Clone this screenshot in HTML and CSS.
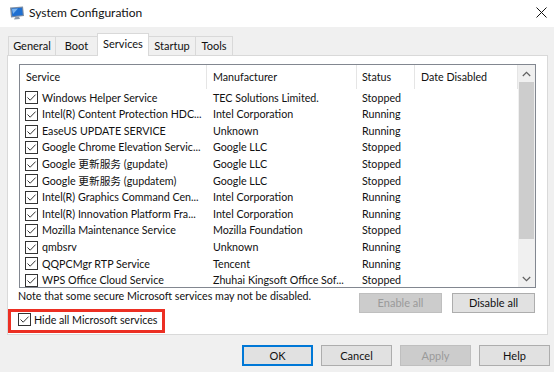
FILE: index.html
```html
<!DOCTYPE html>
<html>
<head>
<meta charset="utf-8">
<link rel="stylesheet" href="styles.css">
</head>
<body>
<div class="window">
  <div class="titlebar">
    <svg class="app-icon" width="16" height="14" viewBox="0 0 16 14">
      <path d="M1 1.5 L14 0.5 L15 10 L2 11.5 Z" fill="#7d8da3"/>
      <path d="M2.5 2.6 L13 1.8 L13.8 9 L3.3 10.2 Z" fill="#1f6fd1"/>
      <path d="M3 3 L9 2.5 L4 8 Z" fill="#8fc3f5" opacity="0.8"/>
      <path d="M6 11.2 L10 10.8 L11 13 L5 13.5 Z" fill="#8a96a6"/>
    </svg>
    <span class="title">System Configuration</span>
    <svg class="close" width="11" height="11" viewBox="0 0 11 11">
      <path d="M0.5 0.5 L10.5 10.5 M10.5 0.5 L0.5 10.5" stroke="#111" stroke-width="1"/>
    </svg>
  </div>
  <div class="main">
    <div class="tabs">
      <div class="tab w-general">General</div>
      <div class="tab w-boot">Boot</div>
      <div class="tab active w-services">Services</div>
      <div class="tab w-startup">Startup</div>
      <div class="tab w-tools">Tools</div>
    </div>
    <div class="panel">
      <div class="list">
        <div class="list-main">
          <div class="row head">
            <div class="th">Service</div>
            <div class="th">Manufacturer</div>
            <div class="th">Status</div>
            <div class="th">Date Disabled</div>
          </div>
          <div class="row"><div class="c1"><span class="cb"></span>Windows Helper Service</div><div class="c2">TEC Solutions Limited.</div><div class="c3">Stopped</div><div></div></div>
          <div class="row"><div class="c1"><span class="cb"></span>Intel(R) Content Protection HDC...</div><div class="c2">Intel Corporation</div><div class="c3">Running</div><div></div></div>
          <div class="row"><div class="c1"><span class="cb"></span>EaseUS UPDATE SERVICE</div><div class="c2">Unknown</div><div class="c3">Running</div><div></div></div>
          <div class="row"><div class="c1"><span class="cb"></span>Google Chrome Elevation Servic...</div><div class="c2">Google LLC</div><div class="c3">Stopped</div><div></div></div>
          <div class="row"><div class="c1"><span class="cb"></span>Google 更新服务 (gupdate)</div><div class="c2">Google LLC</div><div class="c3">Stopped</div><div></div></div>
          <div class="row"><div class="c1"><span class="cb"></span>Google 更新服务 (gupdatem)</div><div class="c2">Google LLC</div><div class="c3">Stopped</div><div></div></div>
          <div class="row"><div class="c1"><span class="cb"></span>Intel(R) Graphics Command Cen...</div><div class="c2">Intel Corporation</div><div class="c3">Running</div><div></div></div>
          <div class="row"><div class="c1"><span class="cb"></span>Intel(R) Innovation Platform Fra...</div><div class="c2">Intel Corporation</div><div class="c3">Running</div><div></div></div>
          <div class="row"><div class="c1"><span class="cb"></span>Mozilla Maintenance Service</div><div class="c2">Mozilla Foundation</div><div class="c3">Stopped</div><div></div></div>
          <div class="row"><div class="c1"><span class="cb"></span>qmbsrv</div><div class="c2">Unknown</div><div class="c3">Running</div><div></div></div>
          <div class="row"><div class="c1"><span class="cb"></span>QQPCMgr RTP Service</div><div class="c2">Tencent</div><div class="c3">Running</div><div></div></div>
          <div class="row"><div class="c1"><span class="cb"></span>WPS Office Cloud Service</div><div class="c2">Zhuhai Kingsoft Office Sof...</div><div class="c3">Stopped</div><div></div></div>
        </div>
        <div class="scrollbar">
          <div class="sb-arrow">
            <svg width="9" height="6" viewBox="0 0 9 6"><path d="M0.8 5 L4.5 1.3 L8.2 5" fill="none" stroke="#606060" stroke-width="1.2"/></svg>
          </div>
          <div class="sb-track"><div class="sb-thumb"></div></div>
          <div class="sb-arrow">
            <svg width="9" height="6" viewBox="0 0 9 6"><path d="M0.8 1 L4.5 4.7 L8.2 1" fill="none" stroke="#606060" stroke-width="1.2"/></svg>
          </div>
        </div>
      </div>
      <div class="under">
        <div class="under-left">
          <div class="note">Note that some secure Microsoft services may not be disabled.</div>
          <div class="hide-row"><span class="cb"></span>Hide all Microsoft services</div>
        </div>
        <div class="under-btns">
          <button class="btn wide disabled">Enable all</button>
          <button class="btn wide">Disable all</button>
        </div>
      </div>
    </div>
    <div class="footer">
      <button class="btn default">OK</button>
      <button class="btn">Cancel</button>
      <button class="btn disabled">Apply</button>
      <button class="btn">Help</button>
    </div>
  </div>
  <div class="annotation"></div>
</div>
</body>
</html>
```

FILE: styles.css
```css
* { box-sizing: border-box; }
html, body { margin: 0; padding: 0; }
body {
  width: 554px;
  height: 372px;
  overflow: hidden;
  background: #f0f0f0;
  font-family: "Lato", "Noto Sans CJK SC", sans-serif;
  font-size: 10.7px;
  color: #111;
}
.window { position: relative; width: 554px; height: 372px; }

.titlebar {
  height: 27px;
  background: #fff;
  display: flex;
  align-items: center;
  padding-left: 9px;
}
.app-icon { margin-right: 4px; margin-top: -2px; }
.title { font-size: 12px; flex: 1; margin-top: -2px; }
.close { margin-right: 7px; margin-top: -3px; }

.tabs {
  height: 28px;
  display: flex;
  align-items: flex-end;
  padding-left: 8px;
  position: relative;
  z-index: 2;
}
.tab {
  height: 19px;
  border: 1px solid #d9d9d9;
  border-bottom: none;
  background: #f0f0f0;
  margin-left: -1px;
  text-align: center;
  line-height: 18px;
  font-size: 11px;
}
.tab:first-child { margin-left: 0; }
.tab.active {
  height: 23px;
  background: #fff;
  margin-bottom: -1px;
  line-height: 19px;
  border-color: #d9d9d9;
}
.w-general { width: 48px; }
.w-boot { width: 43px; }
.w-services { width: 52px; }
.w-startup { width: 48px; }
.w-tools { width: 38px; }

.panel {
  margin: 0 6px 0 7px;
  height: 280px;
  background: #fff;
  border: 1px solid #d9d9d9;
  padding: 8px 11px 0 11px;
}

.list {
  height: 224px;
  border: 1px solid #828790;
  display: flex;
  overflow: hidden;
}
.list-main { flex: 1; overflow: hidden; }
.row {
  display: grid;
  grid-template-columns: 187px 150px 58px 1fr;
  height: 16.6px;
  line-height: 16.6px;
  white-space: nowrap;
}
.row.head { height: 24px; line-height: 23px; margin-bottom: 0.7px; }
.th { border-right: 1px solid #e5e5e5; padding-left: 6px; }
.th:nth-child(3) { padding-left: 5px; }
.c1 { display: flex; align-items: center; padding-left: 5px; overflow: hidden; }
.c2 { padding-left: 6px; overflow: hidden; }
.c3 { padding-left: 5px; }

.cb {
  display: inline-block;
  flex: none;
  width: 13px;
  height: 13px;
  border: 1px solid #333;
  background: #fff url("data:image/svg+xml;utf8,<svg xmlns='http://www.w3.org/2000/svg' width='11' height='11' viewBox='0 0 11 11'><path d='M1.5 5.5 L4.2 8.2 L9.6 2.6' fill='none' stroke='%23333' stroke-width='1'/></svg>") no-repeat center;
  margin-right: 4px;
}

.scrollbar {
  width: 17px;
  background: #f0f0f0;
  display: flex;
  flex-direction: column;
}
.sb-arrow {
  height: 17px;
  display: flex;
  align-items: center;
  justify-content: center;
  flex: none;
}
.sb-track { flex: 1; padding: 0 1px; }
.sb-thumb { height: 157px; background: #cdcdcd; }

.under {
  display: flex;
  justify-content: space-between;
  margin-left: -1px;
}
.note { line-height: 16px; }
.hide-row {
  display: flex;
  align-items: center;
  height: 16px;
  margin-top: 7px;
}
.hide-row .cb { margin-right: 3px; }
.under-btns {
  display: flex;
  gap: 10px;
  margin-top: 5px;
  margin-right: 1px;
  align-items: flex-start;
}

.btn {
  font-family: inherit;
  font-size: 11px;
  color: #111;
  width: 71px;
  height: 21px;
  padding: 0;
  background: #e1e1e1;
  border: 1px solid #adadad;
  line-height: 18px;
}
.btn.wide { width: 83px; height: 20px; }
.btn.disabled { background: #cccccc; border-color: #bfbfbf; color: #9a9a9a; }
.btn.default { border: 2px solid #0078d7; }

.footer {
  display: flex;
  justify-content: flex-end;
  gap: 8px;
  margin-top: 10px;
  padding-right: 4px;
}

.annotation {
  position: absolute;
  left: 8px;
  top: 309px;
  width: 157px;
  height: 24px;
  border: 3px solid #ec2f23;
}
```
